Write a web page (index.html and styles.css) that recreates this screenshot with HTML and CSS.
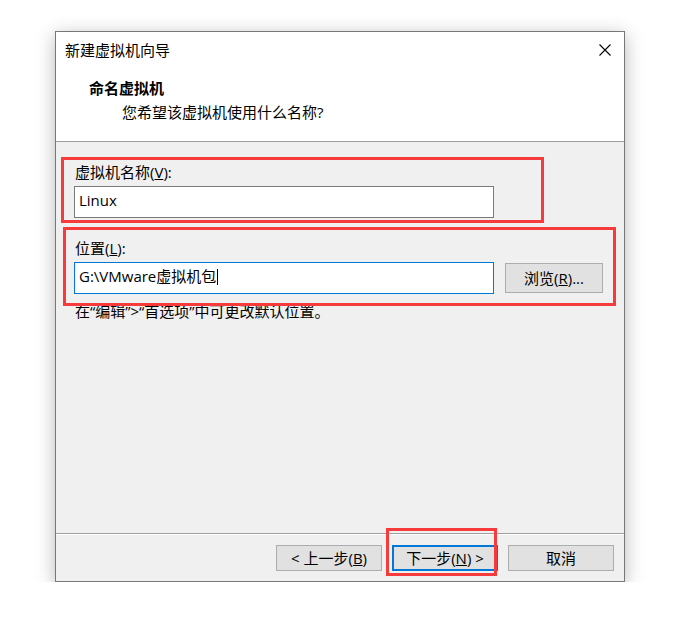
FILE: index.html
```html
<!DOCTYPE html>
<html lang="zh-CN">
<head>
<meta charset="utf-8">
<title>新建虚拟机向导</title>
<link rel="stylesheet" href="styles.css">
</head>
<body>
<div class="dialog">
  <div class="titlebar">
    <span class="title">新建虚拟机向导</span>
    <svg class="close" width="12" height="12" viewBox="0 0 12 12"><path d="M0.5 0.5L11.5 11.5M11.5 0.5L0.5 11.5" stroke="#000" stroke-width="1.1" fill="none"/></svg>
  </div>
  <div class="header">
    <div class="h1">命名虚拟机</div>
    <div class="sub">您希望该虚拟机使用什么名称?</div>
  </div>
  <div class="content">
    <div class="label">虚拟机名称(<u>V</u>):</div>
    <div class="input">Linux</div>
    <div class="label second">位置(<u>L</u>):</div>
    <div class="row">
      <div class="input focus">G:\VMware虚拟机包<span class="caret"></span></div>
      <div class="btn browse">浏览(<u>R</u>)...</div>
    </div>
    <div class="hint">在“编辑”&gt;“首选项”中可更改默认位置。</div>
  </div>
  <div class="footer">
    <div class="btn">&lt; 上一步(<u>B</u>)</div>
    <div class="btn default">下一步(<u>N</u>) &gt;</div>
    <div class="btn">取消</div>
  </div>
  <div class="mark m1"></div>
  <div class="mark m2"></div>
  <div class="mark m3"></div>
</div>
</body>
</html>
```
FILE: styles.css
```css
* { box-sizing: border-box; }
html, body { margin: 0; background: #fff; }
body {
  padding: 31px 0 0 55px;
  font-family: "Segoe UI", "Open Sans", "Noto Sans CJK SC", sans-serif;
  font-size: 15px;
  color: #000;
}
.dialog {
  position: relative;
  width: 570px;
  height: 551px;
  border: 1px solid #777;
  background: #f0f0f0;
  display: flex;
  flex-direction: column;
  box-shadow: 0 4px 18px rgba(0,0,0,0.28);
}
.titlebar {
  height: 36px;
  background: #fff;
  display: flex;
  align-items: center;
  justify-content: space-between;
  padding: 0 13px 0 9px;
  line-height: 20px;
}
.close { display: block; }
.header {
  height: 74px;
  background: #fff;
  border-bottom: 1px solid #a0a0a0;
  padding: 10px 0 0 33px;
  line-height: 20px;
}
.h1 { font-weight: bold; }
.sub { margin: 4px 0 0 33px; }
.content {
  flex: 1;
  padding: 20px 0 0 18px;
  line-height: 20px;
}
.label { padding-left: 1px; margin-bottom: 4px; }
.label.second { margin-top: 20px; }
.input {
  width: 420px;
  height: 32px;
  border: 1px solid #7a7a7a;
  background: #fff;
  padding: 0 4px 5px 4px;
  display: flex;
  align-items: center;
}
.input.focus { border-color: #0078d7; }
.caret {
  display: inline-block;
  width: 1px;
  height: 16px;
  background: #000;
  margin: 3px 0 0 1px;
}
.row {
  display: flex;
  align-items: center;
  gap: 11px;
}
.btn {
  height: 26px;
  width: 106px;
  background: #e1e1e1;
  border: 1px solid #adadad;
  display: flex;
  align-items: center;
  justify-content: center;
  line-height: 20px;
}
.btn.browse { width: 98px; height: 30px; }
.btn.default { border: 2px solid #0078d7; }
.hint { margin-top: 7px; padding-left: 1px; }
.footer {
  height: 48px;
  border-top: 1px solid #a0a0a0;
  box-shadow: inset 0 1px 0 #fff;
  display: flex;
  justify-content: flex-end;
  gap: 10px;
  padding: 11px 10px 0 0;
}
.mark {
  position: absolute;
  border: 3px solid #f53b3b;
}
.m1 { left: 5px; top: 125px; width: 483px; height: 66px; }
.m2 { left: 7px; top: 195px; width: 553px; height: 79px; }
.m3 { left: 330px; top: 496px; width: 111px; height: 48px; }
```
